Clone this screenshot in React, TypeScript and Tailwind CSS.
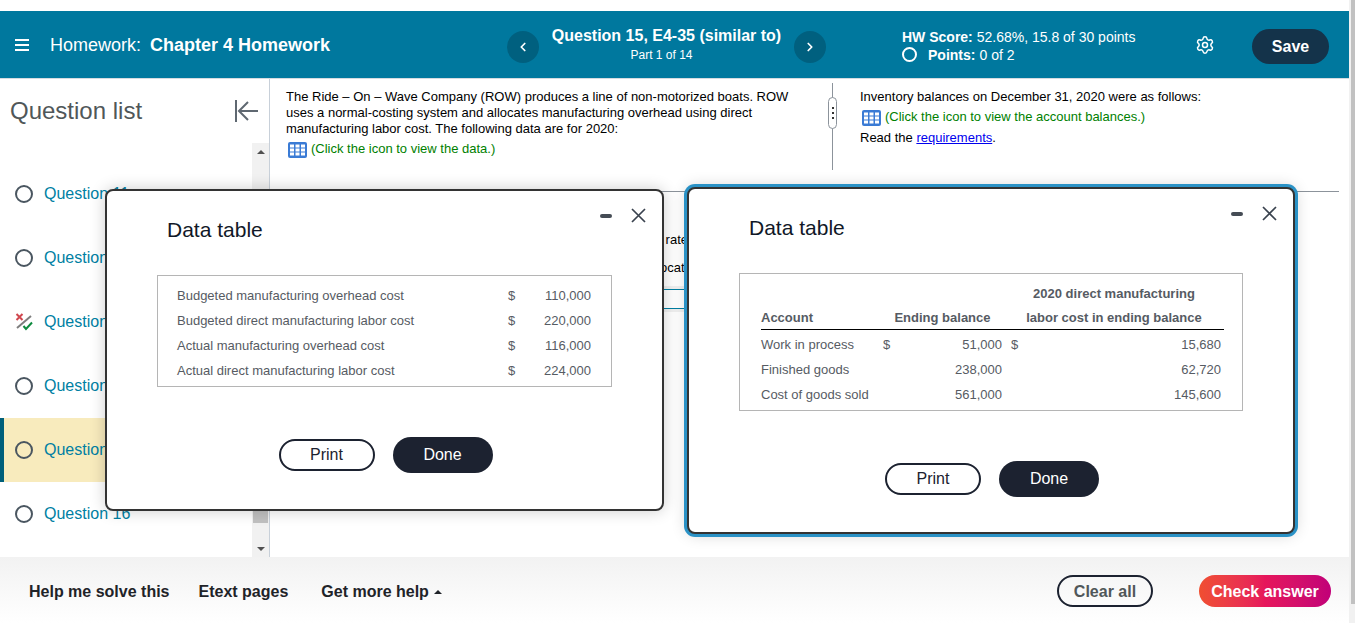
import { Settings, ChevronLeft, ChevronRight } from 'lucide-react';

const questions = ['Question 11', 'Question 12', 'Question 13', 'Question 14', 'Question 15', 'Question 16'];

const overheadRows = [
  ['Budgeted manufacturing overhead cost', '110,000'],
  ['Budgeted direct manufacturing labor cost', '220,000'],
  ['Actual manufacturing overhead cost', '116,000'],
  ['Actual direct manufacturing labor cost', '224,000'],
];

const balanceRows = [
  ['Work in process', '$', '51,000', '$', '15,680'],
  ['Finished goods', '', '238,000', '', '62,720'],
  ['Cost of goods sold', '', '561,000', '', '145,600'],
];

function TableIcon() {
  return (
    <svg width="19" height="16" viewBox="0 0 19 16" className="shrink-0">
      <rect width="19" height="16" rx="2" fill="#3a7bd5" />
      <rect x="2" y="2.5" width="4" height="3" fill="#fff" />
      <rect x="7.5" y="2.5" width="4" height="3" fill="#fff" />
      <rect x="13" y="2.5" width="4" height="3" fill="#fff" />
      <rect x="2" y="6.5" width="4" height="3" fill="#fff" />
      <rect x="7.5" y="6.5" width="4" height="3" fill="#fff" />
      <rect x="13" y="6.5" width="4" height="3" fill="#fff" />
      <rect x="2" y="10.5" width="4" height="3" fill="#fff" />
      <rect x="7.5" y="10.5" width="4" height="3" fill="#fff" />
      <rect x="13" y="10.5" width="4" height="3" fill="#fff" />
    </svg>
  );
}

function PartialIcon() {
  return (
    <svg width="18" height="18" viewBox="0 0 18 18" className="shrink-0">
      <path d="M1.5 1l6 6M7.5 1l-6 6" stroke="#d0474f" strokeWidth="2" fill="none" />
      <path d="M2 15L16 3" stroke="#7d7d7d" strokeWidth="2" fill="none" />
      <path d="M8.5 13l2.5 3 6-6.5" stroke="#0d8a3e" strokeWidth="2" fill="none" />
    </svg>
  );
}

function ModalHead() {
  return (
    <div className="h-[84px] flex justify-between items-start">
      <h2 className="pt-[27px] pl-[60px] text-[21px] leading-6 text-[#111827]">Data table</h2>
      <div className="pt-[17px] pr-[16px] flex items-center gap-[19px]">
        <span className="block w-3 h-1 rounded-sm bg-[#454c55]" />
        <svg width="15" height="15" viewBox="0 0 15 15" fill="none" stroke="#39424e" strokeWidth="1.7">
          <path d="M1 1l13 13M14 1L1 14" />
        </svg>
      </div>
    </div>
  );
}

function ModalButtons() {
  return (
    <div className="mt-[50px] pl-[2px] flex justify-center items-center gap-[18px]">
      <button className="w-24 h-8 rounded-full border-2 border-[#1c2230] text-base text-[#1c2230]">Print</button>
      <button className="w-[100px] h-9 rounded-full bg-[#1c2230] text-base text-white">Done</button>
    </div>
  );
}

export default function App() {
  return (
    <div className="relative w-[1355px] h-[623px] overflow-hidden flex bg-white font-['Liberation_Sans',Arial,sans-serif]">
      <div className="w-[1349px] h-full flex flex-col">
        <div className="h-[11px] shrink-0" />
        {/* header */}
        <header className="h-[68px] shrink-0 bg-[#00789e] border-b border-[#d5dbe0] text-white flex items-center">
          <div className="w-[480px] pl-[15px] flex items-center">
            <div className="w-[14px] flex flex-col gap-[3px] mr-[21px]">
              <span className="h-[2px] bg-white" />
              <span className="h-[2px] bg-white" />
              <span className="h-[2px] bg-white" />
            </div>
            <span className="text-lg">Homework:</span>
            <span className="text-lg font-bold ml-[9px]">Chapter 4 Homework</span>
          </div>
          <div className="w-[319px] ml-[27px] flex items-center justify-between">
            <button className="w-8 h-8 mt-[4px] rounded-full bg-[#00607f] flex items-center justify-center">
              <ChevronLeft size={14} strokeWidth={3} />
            </button>
            <div className="text-center">
              <div className="text-base font-bold leading-5">Question 15, E4-35 (similar to)</div>
              <div className="text-xs leading-4 mt-[1px] pr-[10px]">Part 1 of 14</div>
            </div>
            <button className="w-8 h-8 mt-[4px] rounded-full bg-[#00607f] flex items-center justify-center">
              <ChevronRight size={14} strokeWidth={3} />
            </button>
          </div>
          <div className="ml-[76px] w-[284px] mt-[2px] text-sm leading-[18px]">
            <div>
              <b>HW Score:</b> 52.68%, 15.8 of 30 points
            </div>
            <div className="flex items-center">
              <span className="w-[15px] h-[15px] rounded-full border-2 border-white mr-[11px]" />
              <b>Points:</b>
              <span className="ml-1">0 of 2</span>
            </div>
          </div>
          <Settings size={20} strokeWidth={1.8} className="ml-[9px]" />
          <button className="ml-[37px] mt-[4px] w-[77px] h-[35px] rounded-full bg-[#14334a] text-base font-bold">Save</button>
        </header>

        <div className="flex-1 flex min-h-0">
          {/* question list */}
          <aside className="w-[270px] shrink-0 border-r border-[#c8d0d9] flex flex-col">
            <div className="h-[64px] shrink-0 pl-[10px] pr-[10px] flex items-center justify-between">
              <h2 className="text-2xl text-[#505759]">Question list</h2>
              <svg width="25" height="24" viewBox="0 0 25 24" fill="none" stroke="#5f6871" strokeWidth="2">
                <path d="M2 1v22M24 12H5M14 3l-9 9 9 9" />
              </svg>
            </div>
            <div className="flex-1 flex min-h-0">
              <div className="w-[252px] pt-[19px]">
                {questions.map((q, i) => (
                  <div
                    key={q}
                    className={
                      i === 4
                        ? 'h-16 pl-[11px] border-l-4 border-[#005f7a] bg-[#f8ebbd] flex items-center'
                        : 'h-16 pl-[15px] flex items-center'
                    }
                  >
                    {i === 2 ? (
                      <PartialIcon />
                    ) : (
                      <span className="w-[18px] h-[18px] rounded-full border-2 border-[#4a5660] shrink-0" />
                    )}
                    <span className="ml-[11px] text-base text-[#007fa3]">{q}</span>
                  </div>
                ))}
              </div>
              <div className="w-[17px] bg-[#f1f1f1] flex flex-col items-center">
                <div className="h-[17px] flex items-center justify-center text-[#505050] shrink-0">
                  <span className="border-x-[4px] border-x-transparent border-b-[4px] border-b-[#505050]" />
                </div>
                <div className="flex-1" />
                <div className="w-[15px] h-[200px] bg-[#c1c1c1] shrink-0" />
                <div className="h-[17px] mt-[17px] flex items-center justify-center shrink-0">
                  <span className="border-x-[4px] border-x-transparent border-t-[4px] border-t-[#505050]" />
                </div>
              </div>
            </div>
          </aside>

          {/* question */}
          <main className="flex-1 min-w-0 text-[13px] leading-4 text-black">
            <div className="h-[113px] mr-[10px] border-b border-[#8c939b] flex">
              <div className="w-[562px] pl-[16px] pt-[10px]">
                <p className="w-[510px]">
                  The Ride – On – Wave Company (ROW) produces a line of non-motorized boats. ROW uses a normal-costing
                  system and allocates manufacturing overhead using direct manufacturing labor cost. The following data
                  are for 2020:
                </p>
                <div className="mt-[5px] pl-[2px] flex items-start gap-[4px] text-[#008000]">
                  <TableIcon />
                  <span className="leading-[13px]">(Click the icon to view the data.)</span>
                </div>
              </div>
              <div className="relative w-px h-[87px] mt-[4px] bg-[#8c939b]">
                <span className="absolute left-[-4px] top-[14px] w-[9px] h-[32px] rounded-full border border-[#8c939b] bg-white flex flex-col items-center justify-center gap-[3px]">
                  <span className="w-[2px] h-[2px] bg-[#333]" />
                  <span className="w-[2px] h-[2px] bg-[#333]" />
                  <span className="w-[2px] h-[2px] bg-[#333]" />
                </span>
              </div>
              <div className="pl-[27px] pt-[10px]">
                <p>Inventory balances on December 31, 2020 were as follows:</p>
                <div className="mt-[5px] pl-[2px] flex items-start gap-[4px] text-[#008000]">
                  <TableIcon />
                  <span className="leading-[13px]">(Click the icon to view the account balances.)</span>
                </div>
                <p className="mt-[4px]">
                  Read the <a href="#" className="text-[#0000ee] underline">requirements</a>.
                </p>
              </div>
            </div>
            <div className="pl-[16px] pt-[40px]">
              <p className="w-[402px] text-right whitespace-nowrap">Compute the budgeted manufacturing overhead rate</p>
              <p className="w-[416px] mt-3 text-right whitespace-nowrap">Determine the manufacturing overhead allocation</p>
              <div className="w-[500px] mt-[10px] py-[3px] bg-[#f0f0f0]">
                <div className="h-[20px] border-y border-[#007fa3] bg-white" />
              </div>
            </div>
          </main>
        </div>

        {/* footer */}
        <footer className="h-[66px] shrink-0 pt-[2px] bg-gradient-to-b from-[#f2f2f2] to-white flex items-center pl-[29px] pr-[18px] text-base font-bold text-[#1f2328]">
          <a href="#" className="pt-[2px]">Help me solve this</a>
          <a href="#" className="ml-[29px] pt-[2px]">Etext pages</a>
          <a href="#" className="ml-[33px] pt-[2px] flex items-center gap-[5px]">
            Get more help
            <span className="border-x-[4px] border-x-transparent border-b-[4px] border-b-[#1f2328]" />
          </a>
          <button className="ml-auto w-24 h-8 pt-[1px] rounded-full border-2 border-[#1c2230] text-[#505759]">Clear all</button>
          <button className="ml-[46px] w-[132px] h-8 pt-[1px] rounded-full bg-gradient-to-r from-[#f04e30] via-[#e6165b] to-[#c10078] text-white">
            Check answer
          </button>
        </footer>
      </div>

      {/* page scrollbar */}
      <div className="w-[6px] h-full bg-[#f1f1f1] pl-[2px]">
        <div className="h-[604px] bg-[#c1c1c1]" />
      </div>

      {/* first data table window */}
      <div className="absolute left-[105px] top-[189px] w-[559px] h-[322px] rounded-lg border-2 border-[#333] bg-white shadow-[0_0_16px_rgba(0,0,0,0.2)]">
        <ModalHead />
        <div className="ml-[50px] w-[455px] border border-[#b5b5b5] pt-[7px] pb-[3px] pl-[19px] text-[13px] text-[#565b63]">
          {overheadRows.map(([label, value]) => (
            <div key={label} className="h-[25px] grid grid-cols-[331px_20px_63px] items-center">
              <span>{label}</span>
              <span>$</span>
              <span className="text-right">{value}</span>
            </div>
          ))}
        </div>
        <ModalButtons />
      </div>

      {/* second data table window */}
      <div className="absolute left-[687px] top-[187px] w-[608px] h-[347px] rounded-lg border-2 border-[#333] bg-white ring-[3px] ring-[#2a92c6] shadow-[0_0_16px_rgba(0,0,0,0.2)]">
        <ModalHead />
        <div className="ml-[50px] w-[504px] border border-[#b5b5b5] pt-[7px] pb-[3px] pl-[21px] text-[13px] text-[#565b63]">
          <div className="h-[25px] w-[463px] grid grid-cols-[122px_119px_219px] items-center font-bold">
            <span />
            <span />
            <span className="text-center pl-[5px]">2020 direct manufacturing</span>
          </div>
          <div className="h-[24px] w-[463px] pt-[1px] mb-[2px] border-b border-black grid grid-cols-[122px_119px_219px] items-center font-bold">
            <span>Account</span>
            <span className="text-center">Ending balance</span>
            <span className="text-center pl-[5px]">labor cost in ending balance</span>
          </div>
          {balanceRows.map(([label, d1, v1, d2, v2]) => (
            <div key={label} className="h-[25px] w-[463px] grid grid-cols-[122px_119px_219px] items-center">
              <span>{label}</span>
              <span className="flex justify-between">
                <span>{d1}</span>
                <span>{v1}</span>
              </span>
              <span className="pl-[9px] flex justify-between">
                <span>{d2}</span>
                <span>{v2}</span>
              </span>
            </div>
          ))}
        </div>
        <ModalButtons />
      </div>
    </div>
  );
}
